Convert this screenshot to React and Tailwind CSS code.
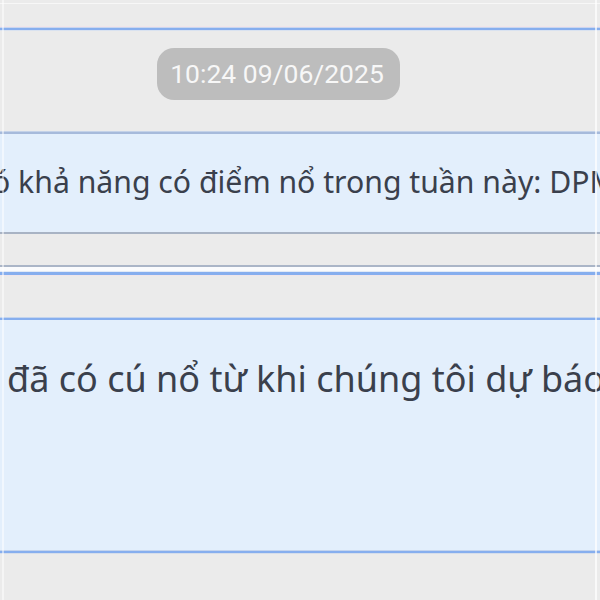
import React from "react";

export default function App() {
  return (
    <div className="relative w-[600px] h-[600px] overflow-hidden bg-[#ebebeb] flex flex-col" style={{ fontFamily: '"Noto Sans", "Open Sans", sans-serif' }}>
      {/* top strip */}
      <div className="h-[3px] shrink-0" />
      <div className="h-[1px] shrink-0 bg-[#f7f7f7]" />
      <div className="h-[22px] shrink-0" />
      <div className="h-[1px] shrink-0 bg-[#f0e4ea]" />
      <div className="h-[1px] shrink-0 bg-[#c9d7ee]" />
      <div className="h-[2px] shrink-0 bg-[#86aeee]" />
      <div className="h-[1px] shrink-0 bg-[#d9e2f0]" />

      {/* timestamp area */}
      <div className="h-[100px] shrink-0 flex items-start pt-[17px] pl-[157px]">
        <div
          className="h-[52px] w-[243px] rounded-[17px] bg-[#bdbdbd] flex items-center justify-center pr-[3px] text-[#f7f7f7] text-[26.5px] leading-none"
          style={{ fontFamily: 'Roboto, "Liberation Sans", sans-serif' }}
        >
          10:24 09/06/2025
        </div>
      </div>

      <div className="h-[1px] shrink-0 bg-[#c4d2e8]" />
      <div className="h-[2px] shrink-0 bg-[#a6badb]" />

      {/* first message */}
      <div className="h-[98px] shrink-0 bg-[#e3effc] flex items-center overflow-hidden">
        <span className="whitespace-nowrap text-[30.2px] text-[#3a404c] ml-[-8px] mt-[-2px]">
          ó khả năng có điểm nổ trong tuần này: DPM
        </span>
      </div>

      <div className="h-[2px] shrink-0 bg-[#a8b3c4]" />
      <div className="h-[31px] shrink-0" />
      <div className="h-[2px] shrink-0 bg-[#aab5c7]" />
      <div className="h-[4px] shrink-0 bg-[#fafbfd]" />
      <div className="h-[1px] shrink-0 bg-[#e2eaf6]" />
      <div className="h-[3px] shrink-0 bg-[#86aeee]" />
      <div className="h-[1px] shrink-0 bg-[#efe5ea]" />

      <div className="h-[41px] shrink-0" />

      <div className="h-[1px] shrink-0 bg-[#c3d4ee]" />
      <div className="h-[2px] shrink-0 bg-[#86aeee]" />

      {/* second message */}
      <div className="h-[230px] shrink-0 bg-[#e3effc] overflow-hidden pt-[34px]">
        <span className="block whitespace-nowrap text-[36px] leading-[50px] text-[#3a404c] pl-[7px]">
          đã có cú nổ từ khi chúng tôi dự báo
        </span>
      </div>

      <div className="h-[1px] shrink-0 bg-[#c3d4ee]" />
      <div className="h-[2px] shrink-0 bg-[#86aeee]" />
      <div className="h-[1px] shrink-0 bg-[#d6deea]" />
      <div className="flex-1" />

      {/* frame edges */}
      <div className="pointer-events-none absolute inset-y-0 left-[2px] w-[2px] bg-white/50" />
      <div className="pointer-events-none absolute inset-y-0 right-[3px] w-[2px] bg-white/70" />
    </div>
  );
}
